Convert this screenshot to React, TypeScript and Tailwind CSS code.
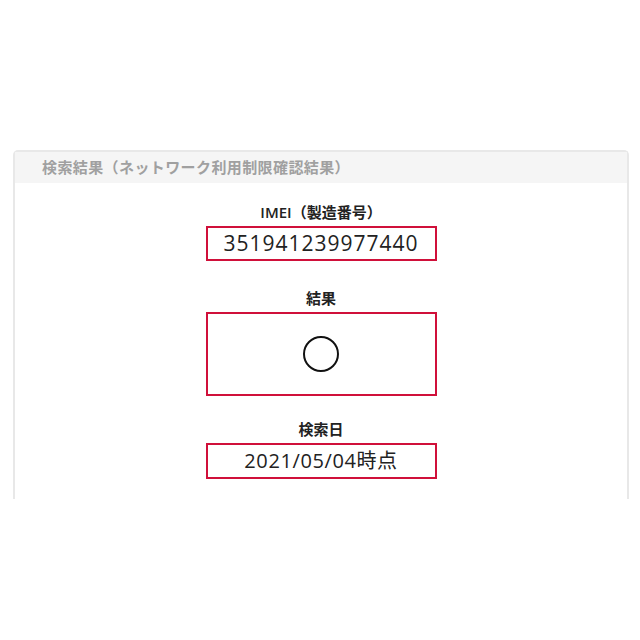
export default function App() {
    const font = { fontFamily: '"Noto Sans CJK JP", "Noto Sans", sans-serif' };
    const valueFont = { fontFamily: '"Open Sans", "Noto Sans CJK JP", sans-serif' };

    return (
        <div className="w-[640px] h-[640px] bg-white overflow-hidden" style={font}>
            <div className="h-[150px]" />
            <div className="ml-[13px] mr-[11px] h-[349px] border-2 border-b-0 border-[#e8e8e8] rounded-t-[5px]">
                {/* Header */}
                <div className="h-[31px] bg-[#f5f5f5] pl-[27px] flex items-center">
                    <span className="text-[15px] font-semibold text-[#a0a0a0] tracking-[0.4px]">
                        検索結果（ネットワーク利用制限確認結果）
                    </span>
                </div>

                <div className="flex flex-col items-center pt-[19px]">
                    <div className="text-[15px] font-semibold text-[#222] leading-[20px]">
                        <span style={valueFont}>IMEI</span>（製造番号）
                    </div>
                    <div
                        className="mt-[4px] w-[231px] h-[35px] border-2 border-[#d0103a] flex items-center justify-center text-[21px] text-[#222] tracking-[1px]"
                        style={valueFont}
                    >
                        351941239977440
                    </div>

                    <div className="mt-[27px] text-[15px] font-semibold text-[#222] leading-[20px]">結果</div>
                    <div className="mt-[4px] w-[231px] h-[84px] border-2 border-[#d0103a] flex items-center justify-center">
                        <div className="w-[36px] h-[36px] rounded-full border-2 border-[#111]" />
                    </div>

                    <div className="mt-[23px] text-[15px] font-semibold text-[#222] leading-[20px]">検索日</div>
                    <div
                        className="mt-[4px] w-[231px] h-[36px] border-2 border-[#d0103a] flex items-center justify-center text-[20px] text-[#222] tracking-[0.6px]"
                        style={valueFont}
                    >
                        2021/05/04時点
                    </div>
                </div>
            </div>
        </div>
    );
}
